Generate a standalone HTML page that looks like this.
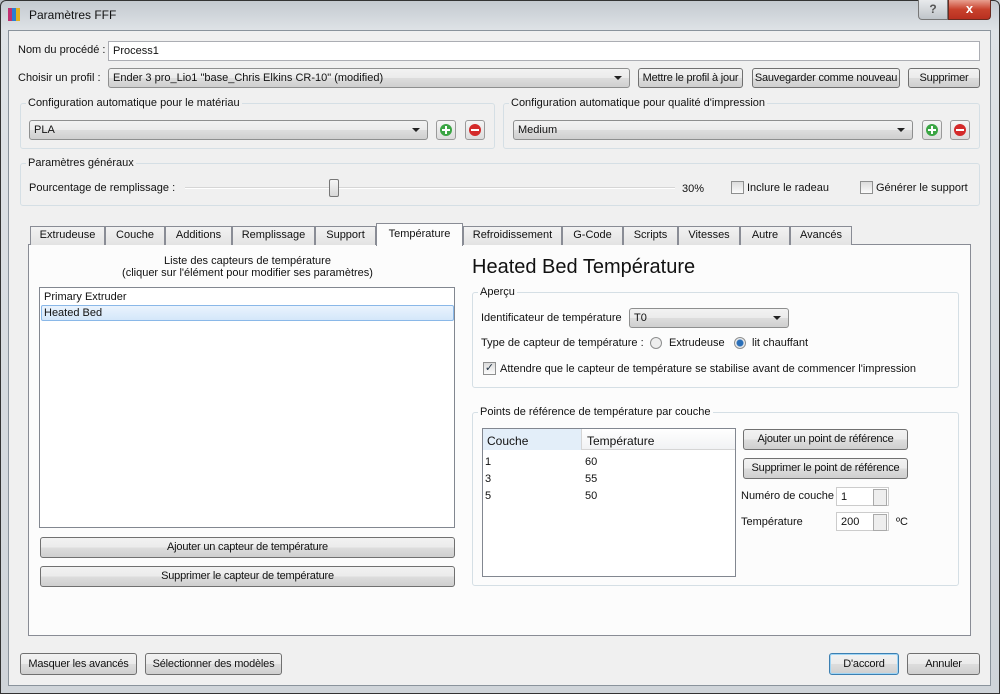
<!DOCTYPE html>
<html><head><meta charset="utf-8"><style>
*{box-sizing:border-box;margin:0;padding:0}
body{width:1000px;height:694px;overflow:hidden;position:relative;font-family:"Liberation Sans",sans-serif;font-size:11px;color:#111;background:linear-gradient(90deg,#b8bec4,#d8dde2 40%,#bcc2c8 70%,#d0d5da);}
.a{position:absolute;white-space:nowrap}
.frame{position:absolute;left:0;top:0;width:1000px;height:694px;border:1px solid #333;border-radius:6px 6px 0 0;background:linear-gradient(180deg,#c4cad0 0,#dfe3e7 30px,#cfd4d9 100%);}
.dlg{position:absolute;left:8px;top:30px;width:983px;height:656px;background:#f0f0f0;border:1px solid #8a939c}
.inp{position:absolute;background:#fff;border:1px solid #abadb3;padding:3px 4px 1px;line-height:13px;white-space:nowrap}
.cb{position:absolute;border:1px solid #8e8f8f;border-radius:3px;background:linear-gradient(#f2f2f2,#ebebeb 50%,#dddddd 51%,#cfcfcf);padding:3px 4px 1px;line-height:13px;white-space:nowrap}
.cb:after{content:"";position:absolute;right:7px;top:7px;border:4px solid transparent;border-top:4px solid #222;border-bottom:0}
.btn{position:absolute;border:1px solid #707070;border-radius:3px;background:linear-gradient(#f2f2f2,#ebebeb 50%,#dddddd 51%,#cfcfcf);text-align:center;line-height:18px;white-space:nowrap;overflow:hidden;letter-spacing:-0.2px}
.grp{position:absolute;border:1px solid #d5dfe5;border-radius:3px}
.gl{position:absolute;background:#f0f0f0;padding:0 2px;top:-8px;left:5px;line-height:14px;white-space:nowrap}
.ib{position:absolute;width:20px;height:20px;border:1px solid #9a9a9a;border-radius:3px;background:linear-gradient(#f6f6f6,#dcdcdc)}
.ib i{position:absolute;left:3px;top:3px;width:12px;height:12px;border-radius:50%}
.ib i:before{content:"";position:absolute;left:2px;top:5px;width:8px;height:2px;background:#fff}
.g i{background:#3aa543}.g i:after{content:"";position:absolute;left:5px;top:2px;width:2px;height:8px;background:#fff}
.r i{background:#d42a2a}
.chk{position:absolute;width:13px;height:13px;border:1px solid #8e8f8f;background:linear-gradient(#dcdcdc,#fbfbfb)}
.tab{position:absolute;top:226px;height:19px;border:1px solid #898c95;border-bottom:none;background:linear-gradient(#f2f2f2,#e3e3e3);text-align:center;line-height:17px;white-space:nowrap}
.rad{position:absolute;width:12px;height:12px;border-radius:50%;border:1px solid #8e8f8f;background:#eee}
.spin{position:absolute;background:#fff;border:1px solid #ccc;padding:3px 4px 1px;line-height:13px}
.spin:after{content:"";position:absolute;right:1px;top:1px;width:12px;height:15px;border:1px solid #aaa;background:#eee}
</style></head><body>
<div class="frame"></div>
<div class="a" style="left:8px;top:8px;width:4px;height:13px;background:#c03070"></div>
<div class="a" style="left:12px;top:8px;width:4px;height:13px;background:#2a7fd0"></div>
<div class="a" style="left:16px;top:8px;width:4px;height:13px;background:#e0b020"></div>
<div class="a" style="left:29px;top:8px;font-size:12px">Paramètres FFF</div>
<div class="a" style="left:918px;top:0;width:30px;height:20px;border:1px solid #777;border-top:none;border-radius:0 0 0 4px;background:linear-gradient(#e8eaec,#bfc4c9);text-align:center;color:#555;font-weight:bold;font-size:12px;line-height:18px">?</div>
<div class="a" style="left:948px;top:0;width:43px;height:20px;border:1px solid #6a2a20;border-top:none;border-radius:0 0 4px 0;background:linear-gradient(#e8a090,#c8412c 50%,#b83020);text-align:center;color:#fff;font-weight:bold;font-size:13px;line-height:18px">x</div>
<div class="dlg"></div>

<div class="a" style="left:18px;top:44px">Nom du procédé :</div>
<div class="inp" style="left:108px;top:41px;width:872px;height:20px">Process1</div>
<div class="a" style="left:18px;top:72px">Choisir un profil :</div>
<div class="cb" style="left:108px;top:68px;width:522px;height:20px">Ender 3 pro_Lio1 "base_Chris Elkins CR-10" (modified)</div>
<div class="btn" style="left:638px;top:68px;width:105px;height:20px">Mettre le profil à jour</div>
<div class="btn" style="left:752px;top:68px;width:148px;height:20px">Sauvegarder comme nouveau</div>
<div class="btn" style="left:908px;top:68px;width:72px;height:20px">Supprimer</div>

<div class="grp" style="left:20px;top:103px;width:475px;height:46px"><span class="gl">Configuration automatique pour le matériau</span></div>
<div class="cb" style="left:29px;top:120px;width:399px;height:20px">PLA</div>
<div class="ib g" style="left:436px;top:120px"><i></i></div>
<div class="ib r" style="left:465px;top:120px"><i></i></div>
<div class="grp" style="left:503px;top:103px;width:477px;height:46px"><span class="gl">Configuration automatique pour qualité d'impression</span></div>
<div class="cb" style="left:513px;top:120px;width:400px;height:20px">Medium</div>
<div class="ib g" style="left:922px;top:120px"><i></i></div>
<div class="ib r" style="left:950px;top:120px"><i></i></div>

<div class="grp" style="left:20px;top:163px;width:960px;height:43px"><span class="gl">Paramètres généraux</span></div>
<div class="a" style="left:29px;top:182px">Pourcentage de remplissage :</div>
<div class="a" style="left:185px;top:187px;width:490px;height:2px;background:#d6d6d6;border-bottom:1px solid #fff"></div>
<div class="a" style="left:329px;top:179px;width:10px;height:18px;border:1px solid #777;border-radius:2px;background:linear-gradient(#f6f6f6,#d8d8d8)"></div>
<div class="a" style="left:682px;top:183px">30%</div>
<div class="chk" style="left:731px;top:181px"></div><div class="a" style="left:747px;top:182px">Inclure le radeau</div>
<div class="chk" style="left:860px;top:181px"></div><div class="a" style="left:876px;top:182px">Générer le support</div>

<div class="a" style="left:28px;top:244px;width:943px;height:392px;background:#fcfcfc;border:1px solid #898c95"></div>
<div class="tab" style="left:30px;width:75px">Extrudeuse</div>
<div class="tab" style="left:105px;width:60px">Couche</div>
<div class="tab" style="left:165px;width:67px">Additions</div>
<div class="tab" style="left:232px;width:83px">Remplissage</div>
<div class="tab" style="left:315px;width:61px">Support</div>
<div class="tab" style="left:376px;width:87px;top:223px;height:23px;background:#fcfcfc;line-height:21px">Température</div>
<div class="tab" style="left:463px;width:99px">Refroidissement</div>
<div class="tab" style="left:562px;width:61px">G-Code</div>
<div class="tab" style="left:623px;width:55px">Scripts</div>
<div class="tab" style="left:678px;width:62px">Vitesses</div>
<div class="tab" style="left:740px;width:50px">Autre</div>
<div class="tab" style="left:790px;width:62px">Avancés</div>

<div class="a" style="left:40px;top:255px;width:415px;text-align:center;line-height:12px">Liste des capteurs de température<br>(cliquer sur l'élément pour modifier ses paramètres)</div>
<div class="a" style="left:39px;top:287px;width:416px;height:241px;background:#fff;border:1px solid #828790"></div>
<div class="a" style="left:44px;top:291px">Primary Extruder</div>
<div class="a" style="left:41px;top:305px;width:413px;height:16px;border:1px solid #8ab8e8;border-radius:2px;background:linear-gradient(#eaf3fd,#d4e7fa)"></div>
<div class="a" style="left:44px;top:307px">Heated Bed</div>
<div class="btn" style="left:40px;top:537px;width:415px;height:21px">Ajouter un capteur de température</div>
<div class="btn" style="left:40px;top:566px;width:415px;height:21px">Supprimer le capteur de température</div>

<div class="a" style="left:472px;top:256px;font-size:20px">Heated Bed Température</div>
<div class="grp" style="left:472px;top:292px;width:487px;height:96px"><span class="gl" style="background:#fcfcfc">Aperçu</span></div>
<div class="a" style="left:481px;top:312px">Identificateur de température</div>
<div class="cb" style="left:629px;top:308px;width:160px;height:20px">T0</div>
<div class="a" style="left:481px;top:337px">Type de capteur de température :</div>
<div class="rad" style="left:650px;top:337px"></div><div class="a" style="left:669px;top:337px">Extrudeuse</div>
<div class="rad" style="left:734px;top:337px;background:radial-gradient(circle,#2a6fb8 0 3px,#eee 4px)"></div><div class="a" style="left:752px;top:337px">lit chauffant</div>
<div class="chk" style="left:483px;top:362px;font-size:11px;line-height:11px;text-align:center;color:#234">✓</div>
<div class="a" style="left:500px;top:363px">Attendre que le capteur de température se stabilise avant de commencer l'impression</div>

<div class="grp" style="left:472px;top:412px;width:487px;height:174px"><span class="gl" style="background:#fcfcfc">Points de référence de température par couche</span></div>
<div class="a" style="left:482px;top:428px;width:254px;height:149px;background:#fff;border:1px solid #828790"></div>
<div class="a" style="left:483px;top:429px;width:99px;height:21px;background:#e3eef9;border-right:1px solid #d5d5d5"></div>
<div class="a" style="left:582px;top:429px;width:153px;height:21px;background:linear-gradient(#fff,#f1f2f4);border-bottom:1px solid #d5d5d5"></div>
<div class="a" style="left:487px;top:434px;font-size:12px">Couche</div>
<div class="a" style="left:587px;top:434px;font-size:12px">Température</div>
<div class="a" style="left:485px;top:454px;line-height:17px">1<br>3<br>5</div>
<div class="a" style="left:585px;top:454px;line-height:17px">60<br>55<br>50</div>
<div class="btn" style="left:743px;top:429px;width:165px;height:21px">Ajouter un point de référence</div>
<div class="btn" style="left:743px;top:458px;width:165px;height:21px">Supprimer le point de référence</div>
<div class="a" style="left:741px;top:490px">Numéro de couche</div>
<div class="spin" style="left:836px;top:487px;width:53px;height:19px">1</div>
<div class="a" style="left:741px;top:516px">Température</div>
<div class="spin" style="left:836px;top:512px;width:53px;height:19px">200</div>
<div class="a" style="left:896px;top:516px">ºC</div>

<div class="btn" style="left:20px;top:653px;width:117px;height:22px;line-height:20px">Masquer les avancés</div>
<div class="btn" style="left:145px;top:653px;width:137px;height:22px;line-height:20px">Sélectionner des modèles</div>
<div class="btn" style="left:829px;top:653px;width:70px;height:22px;line-height:20px;border-color:#3c7fb1;box-shadow:inset 0 0 0 1px #9fd5f5">D'accord</div>
<div class="btn" style="left:907px;top:653px;width:73px;height:22px;line-height:20px">Annuler</div>
</body></html>
